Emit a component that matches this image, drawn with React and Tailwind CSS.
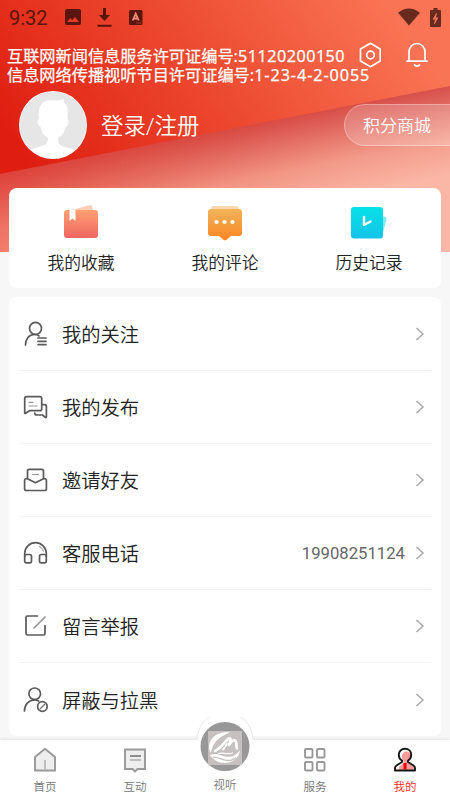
const quickLinks = [
  { label: "我的收藏", Icon: FavoriteIcon },
  { label: "我的评论", Icon: CommentIcon },
  { label: "历史记录", Icon: HistoryIcon },
];

const menu = [
  { label: "我的关注", Icon: FollowIcon },
  { label: "我的发布", Icon: PostsIcon },
  { label: "邀请好友", Icon: InviteIcon },
  { label: "客服电话", Icon: HeadsetIcon, value: "19908251124" },
  { label: "留言举报", Icon: ReportIcon },
  { label: "屏蔽与拉黑", Icon: BlockIcon },
];

function FavoriteIcon() {
  return (
    <svg width="36" height="36" viewBox="0 0 36 36">
      <defs>
        <linearGradient id="fav" x1="0" y1="0" x2="0" y2="1">
          <stop offset="0" stopColor="#ffa072" />
          <stop offset="1" stopColor="#ef6661" />
        </linearGradient>
      </defs>
      <path d="M7 7.500 27 2q1.500-.4 2 1.200L30.500 9 7 14z" fill="#ffcdb8" />
      <rect x="1" y="7" width="34" height="28" rx="3" fill="url(#fav)" />
      <path d="M6.500 7h6v11l-3-2.500-3 2.500z" fill="#fff" />
    </svg>
  );
}

function CommentIcon() {
  return (
    <svg width="36" height="38" viewBox="0 0 36 38" className="-mb-[2px]">
      <defs>
        <linearGradient id="comment" x1="0" y1="0" x2="0" y2="1">
          <stop offset="0" stopColor="#f2b45c" />
          <stop offset="1" stopColor="#fb8522" />
        </linearGradient>
      </defs>
      <path d="M6.500 3h23q1.500 0 2 1.200L33.500 8h-31l2-3.800q.5-1.200 2-1.200z" fill="#fcd9b0" />
      <path
        d="M4 6h28q3 0 3 3v21q0 3-3 3h-8l-4.500 3.700q-1.500 1.100-3 0L12 33H4q-3 0-3-3V9q0-3 3-3z"
        fill="url(#comment)"
      />
      <circle cx="9.500" cy="19" r="2.100" fill="#fff" />
      <circle cx="17.500" cy="19" r="2.100" fill="#fff" />
      <circle cx="25.500" cy="19" r="2.100" fill="#fff" />
    </svg>
  );
}

function HistoryIcon() {
  return (
    <svg width="36" height="36" viewBox="0 0 36 36">
      <defs>
        <linearGradient id="history" x1="0" y1="0" x2="0" y2="1">
          <stop offset="0" stopColor="#05e2e7" />
          <stop offset="1" stopColor="#16c3e9" />
        </linearGradient>
      </defs>
      <path d="M30 12.500l4.500 1.400q1.500.6 1 2L32 30h-3z" fill="#7de9f1" />
      <rect x="0" y="4" width="32" height="31.500" rx="3" fill="url(#history)" />
      <path d="M13 14v8l6.500-3.500" fill="none" stroke="#fff" strokeWidth="2.400" strokeLinecap="round" strokeLinejoin="round" />
    </svg>
  );
}

function LineIcon({ children }) {
  return (
    <svg
      className="mt-[2px]"
      width="26"
      height="28"
      viewBox="0 0 26 28"
      fill="none"
      stroke="#5a5a5a"
      strokeWidth="1.700"
      strokeLinecap="round"
      strokeLinejoin="round"
    >
      {children}
    </svg>
  );
}

function FollowIcon() {
  return (
    <LineIcon>
      <circle cx="12.500" cy="7.300" r="6" />
      <path d="M2.500 24c0-6 3.500-10.500 9-10.500 2 0 3.500.5 4.500 1.500M15 17h8M15 20.300h8M15 23.600h8" />
    </LineIcon>
  );
}

function PostsIcon() {
  return (
    <LineIcon>
      <path d="M3.500 2.700h13.500q1.700 0 1.700 1.700v10.600q0 1.700-1.700 1.700H6.500L2.700 19.200q-1 .7-1-.5V4.400q0-1.700 1.800-1.700z" />
      <path d="M19 10.700h2.500q1.900 0 1.900 1.900v10q0 1.500-1.200.7L19.500 21h-5.700q-2 0-2-2" />
      <path d="M6 8.300h4M6 12h8" stroke="#999" strokeWidth="1.200" />
    </LineIcon>
  );
}

function InviteIcon() {
  return (
    <LineIcon>
      <path d="M4.500 11.500V4q0-1.700 1.700-1.700h12.600q1.700 0 1.700 1.700v7.500" />
      <path d="M4 11.500q-2.400 0-2.400 2v8.300q0 1.700 1.700 1.700h18.400q1.700 0 1.700-1.700v-8.300q0-2-2.400-2l-8.500 4.200z" />
      <path d="M9.500 7.500h6" stroke="#999" strokeWidth="1.200" />
    </LineIcon>
  );
}

function HeadsetIcon() {
  return (
    <LineIcon>
      <path d="M1.700 16v-2.500a10.800 10.800 0 0 1 21.600 0V16" />
      <rect x="1.700" y="14.500" width="6.800" height="8.300" rx="1.700" />
      <rect x="16.500" y="14.500" width="6.800" height="8.300" rx="1.700" />
      <path d="M16.500 6.500q3 1.500 4 4.500" stroke="#aaa" strokeWidth="1.200" />
    </LineIcon>
  );
}

function ReportIcon() {
  return (
    <LineIcon>
      <path d="M14.500 3H4.500Q3 3 3 4.500v16Q3 22 4.500 22h16q1.500 0 1.500-1.500V12.500" />
      <path d="M22 4 11 15" stroke="#999" />
    </LineIcon>
  );
}

function BlockIcon() {
  return (
    <LineIcon>
      <circle cx="11.700" cy="6.800" r="5.800" />
      <path d="M1.500 24c0-6.500 4-11 10-11 1.600 0 3 .4 4.200 1" />
      <circle cx="19.400" cy="19.500" r="4.800" />
      <path d="m17 22 5-5" stroke="#777" strokeWidth="1.300" />
    </LineIcon>
  );
}

function Chevron() {
  return (
    <svg width="10" height="14" viewBox="0 0 10 14" fill="none" stroke="#aaa" strokeWidth="1.500">
      <path d="M1.500 1 8 7l-6.500 6" />
    </svg>
  );
}

function StatusBar() {
  return (
    <div className="flex h-[34px] items-center pl-[9px] pr-[9px] text-[#5a150d]">
      <span className="w-[56px] pt-[1px] font-[Roboto] text-[20px] leading-none">9:32</span>
      <svg width="16" height="16" viewBox="0 0 16 16" fill="currentColor">
        <path
          fillRule="evenodd"
          d="M2 0h12q2 0 2 2v12q0 2-2 2H2q-2 0-2-2V2Q0 0 2 0zM2 13h12L10 8l-2.800 3.300L5.300 9z"
        />
      </svg>
      <svg className="ml-[16px]" width="15" height="19" viewBox="0 0 15 19" fill="currentColor">
        <path d="M6 0h3v7h4l-5.500 6L2 7h4zM.5 16.800h14v2H.5z" />
      </svg>
      <svg className="ml-[17px]" width="14" height="15" viewBox="0 0 14 15">
        <rect width="13.500" height="15" rx="1.500" fill="currentColor" />
        <path d="M3.700 10.500 6.700 3.800l3 6.700M4.800 8.500h3.800" fill="none" stroke="#f08a78" strokeWidth="1.800" />
        <path d="M7.500 13h1M9.500 13h1M11.300 13h1" stroke="#d45747" />
      </svg>
      <svg className="ml-auto text-[#672a1c]" width="22" height="18" viewBox="0 0 22 18" fill="currentColor">
        <path d="M0 4.800Q11-3.800 22 4.800L11 17.500z" />
      </svg>
      <svg className="ml-[10px] text-[#672a1c]" width="11" height="19" viewBox="0 0 11 19">
        <path d="M3.500 0h4v2H10q1 0 1 1v15q0 1-1 1H1q-1 0-1-1V3q0-1 1-1h2.500z" fill="currentColor" />
        <path d="M6.500 5 3 11.300h2.200L4.500 16 8 9.700H5.800z" fill="#ef765c" stroke="#ef765c" strokeWidth="0.500" />
      </svg>
    </div>
  );
}

// Diagonal two-tone backdrop that sits behind the profile area
function HeaderBackdrop() {
  return (
    <svg className="absolute left-0 top-0" width="450" height="252" viewBox="0 0 450 252">
      <defs>
        <linearGradient id="top" gradientUnits="userSpaceOnUse" x1="30" y1="170" x2="340" y2="-60">
          <stop offset="0" stopColor="#df1d10" />
          <stop offset="0.500" stopColor="#ec492f" />
          <stop offset="1" stopColor="#f97454" />
        </linearGradient>
        <linearGradient id="fold" gradientUnits="userSpaceOnUse" x1="205" y1="133" x2="222" y2="220">
          <stop offset="0" stopColor="#d64640" />
          <stop offset="0.200" stopColor="#de6058" />
          <stop offset="0.600" stopColor="#f39886" />
          <stop offset="1" stopColor="#fbb3a1" />
        </linearGradient>
        <linearGradient id="foldLeft" x1="0" y1="0" x2="1" y2="0">
          <stop offset="0" stopColor="#e8392d" stopOpacity="0.400" />
          <stop offset="0.500" stopColor="#e5513d" stopOpacity="0.100" />
          <stop offset="1" stopColor="#fff" stopOpacity="0.050" />
        </linearGradient>
      </defs>
      <rect width="450" height="252" fill="url(#top)" />
      <path d="M0 174 450 86v166H0z" fill="url(#fold)" />
      <path d="M0 174 450 86v166H0z" fill="url(#foldLeft)" />
    </svg>
  );
}

function Header() {
  return (
    <header className="relative h-[188px] text-white">
      <StatusBar />
      <div className="flex h-[57px] pl-[7px]">
        <div className="w-[380px] whitespace-nowrap pt-[13px] font-['Noto_Sans','Noto_Sans_CJK_SC',sans-serif] text-[16.200px] leading-[19px] [-webkit-text-stroke:0.250px_white]">
          <p>
            互联网新闻信息服务许可证编号:<span className="tracking-[0.480px]">51120200150</span>
          </p>
          <p>
            信息网络传播视听节目许可证编号:<span className="tracking-[0.920px]">1-23-4-2-0055</span>
          </p>
        </div>
        <div className="-ml-[28px] flex gap-[25px] pt-[8px]">
          <svg width="22" height="26" viewBox="0 0 22 26" fill="none" stroke="#fff" strokeWidth="1.700">
            <path d="M11.500 1.200 21.200 7v12l-9.700 5.800L1.500 19V7z" strokeLinejoin="round" />
            <circle cx="11.500" cy="13" r="3.800" />
          </svg>
          <svg width="22" height="26" viewBox="0 0 22 26" fill="none" stroke="#fff" strokeWidth="1.700" strokeLinecap="round" strokeLinejoin="round">
            <path d="M3 18.500V10a8 8.500 0 0 1 16 0v8.500M1 19.200h20M8.500 23q2.500 2 5 0" />
          </svg>
        </div>
      </div>
      <div className="flex items-center">
        <svg className="ml-[19px]" width="68" height="68" viewBox="0 0 68 68">
          <defs>
            <clipPath id="avatar">
              <circle cx="34" cy="34" r="33.200" />
            </clipPath>
          </defs>
          <circle cx="34" cy="34" r="34" fill="#fff" />
          <g clipPath="url(#avatar)">
            <rect width="68" height="68" fill="#e6e6e6" />
            <path
              d="M20 28c-1.500-11 2-17.500 9-18.500 7-.6 12 .5 15.500-1.500l.5 3c4.500 4 4 10 3.300 17 2.500 1 1 7-1.800 8-1 6-4 9-7.500 11 0 5.500 1 7 7 9 8 2 14 4 17 12H4c2-7 8-10 16-12 6-2 9-3.500 9-9-3.500-2-6.500-5-7.500-11-2.500-1-4.500-7-1.500-8z"
              fill="#fff"
            />
          </g>
        </svg>
        <span className="ml-[14px] pt-[3px] text-[22.400px] font-[350] leading-none">登录/注册</span>
        <div className="ml-auto flex h-[42px] w-[106px] items-center rounded-l-full border border-r-0 border-white/30 bg-white/20 pl-[18px] pt-[3px] text-[17px] font-[350]">
          积分商城
        </div>
      </div>
    </header>
  );
}

function QuickLinks() {
  return (
    <section className="relative mx-[9px] grid h-[100px] grid-cols-3 rounded-lg bg-white">
      {quickLinks.map(({ label, Icon }) => (
        <div key={label} className="flex flex-col items-center pt-[15px]">
          <Icon />
          <span className="mt-[12px] text-[16.800px] font-[350] leading-6">{label}</span>
        </div>
      ))}
    </section>
  );
}

function Menu() {
  return (
    <section className="mx-[9px] mt-[9px] h-[439px] rounded-lg bg-white px-[10px] pt-[0.500px]">
      {menu.map(({ label, Icon, value }) => (
        <div key={label} className="flex h-[73.100px] items-center border-b border-[#f3f3f3] pl-[4px] pr-[6px] last:border-b-0">
          <Icon />
          <span className="ml-[13px] pt-[5px] text-[19.300px] font-[350]">{label}</span>
          <span className="ml-auto mr-[10px] pt-[2px] font-[Roboto] text-[16.700px] text-[#666]">{value}</span>
          <Chevron />
        </div>
      ))}
    </section>
  );
}

function Tab({ label, active, children }) {
  return (
    <div className={"flex w-[90px] flex-col items-center pt-[7px] text-[11.500px] " + (active ? "text-[#f92c26]" : "text-[#777]")}>
      <svg width="24" height="26" viewBox="0 0 24 26" fill="none" stroke="#999" strokeWidth="1.900">
        {children}
      </svg>
      <span className="mt-[5px] font-[350] leading-[18px]">{label}</span>
    </div>
  );
}

function TabBar() {
  return (
    <nav className="relative flex h-[60px] bg-white shadow-[0_-1px_3px_rgba(0,0,0,0.080)]">
      <Tab label="首页">
        <path d="M2 10 12 1.800 22 10v13.500H2z" fill="#eee" />
        <path d="M12 13v9" stroke="#bbb" />
      </Tab>
      <Tab label="互动">
        <path d="M2 2.500h20V22h-7.500L12 24.500 9.500 22H2z" fill="#eee" />
        <path d="M7 9h11" stroke="#888" />
        <path d="M7 13h11" stroke="#bbb" />
      </Tab>
      <div className="w-[90px] text-center text-[11.500px] text-[#777]">
        <div className="relative -mt-[23px] flex h-[57px] justify-center">
          <CenterLogo />
        </div>
        <span className="block pt-[2px] font-[350] leading-[18px]">视听</span>
      </div>
      <Tab label="服务">
        <rect x="2" y="2" width="7.500" height="8.500" rx="1" />
        <rect x="14" y="2" width="7.500" height="8.500" rx="1" />
        <rect x="2" y="15" width="7.500" height="8.500" rx="1" />
        <rect x="14" y="15" width="7.500" height="8.500" rx="1" />
      </Tab>
      <Tab label="我的" active>
        <path d="M13 4.500c3.500 0 5 2 5 4.500 0 2-1.300 3.500-3 4V16l6 3.500v4H6V20l4.500-4v-2.500C9.500 13 9 12 9 10c0-3 1.500-5.500 4-5.500z" fill="#ff9c9a" stroke="none" />
        <path d="M12 16v6.500" stroke="#f0000b" strokeWidth="3" />
        <path
          d="M12 1.800c3.600 0 6.200 2.600 6.200 6 0 2.800-1.300 4.700-3.200 5.700v1.500l5.500 3.500q1.500 1 1.500 2.500v2.500H2V21q0-1.500 1.500-2.500L9 15v-1.500c-1.900-1-3.200-2.900-3.200-5.700 0-3.400 2.600-6 6.200-6z"
          stroke="#171717"
          strokeLinejoin="round"
        />
      </Tab>
    </nav>
  );
}

function CenterLogo() {
  return (
    <svg width="58" height="57" viewBox="0 0 58 57">
      <path d="M1 23.500a28 28 0 0 1 56 0z" fill="#fff" />
      <path d="M1 23a28 28 0 0 1 56 0" fill="none" stroke="#e9e9e9" />
      <circle cx="29" cy="29.500" r="24.500" fill="#989898" />
      <rect x="12" y="14" width="34" height="34" fill="#c5c1c1" />
      <path d="M34 15.500C22 13.500 13 21 13 30c0 3 1 5 2 6 1-9 7-16 19-20.500z" fill="#fff" />
      <path d="M19 34c5-2 9-8 13-12 1.500-1.500 3-.5 2.500 1.500L33 28c2-3 4.500-5 6-4.500 2.500 1 .5 5 2 8" fill="none" stroke="#fff" strokeWidth="2.600" strokeLinecap="round" strokeLinejoin="round" />
      <path d="M27 32.500c1.500-1.500 2.500-3.500 4-5.500" fill="none" stroke="#fff" strokeWidth="1.800" strokeLinecap="round" />
      <path d="M14 38c6-2.500 10 .5 15 1.500 6 1 11-.5 15-6.500-1 8-7 13-15 13-7 0-12-3.500-15-8z" fill="#fff" />
      <path d="M17 40.500c6-1 9 3 15 3 3 0 6-1 8-3" fill="none" stroke="#c5c1c1" strokeWidth="1.300" />
      <path d="M22 37c4-3 8 1.500 15-1" fill="none" stroke="#fff" strokeWidth="1.300" />
    </svg>
  );
}

export default function App() {
  return (
    <div className="relative flex h-[800px] w-[450px] flex-col overflow-hidden bg-[#f7f7f7] font-['Roboto','Noto_Sans_CJK_SC',sans-serif] text-[#222]">
      <HeaderBackdrop />
      <Header />
      <QuickLinks />
      <Menu />
      <div className="mt-auto">
        <TabBar />
      </div>
    </div>
  );
}
